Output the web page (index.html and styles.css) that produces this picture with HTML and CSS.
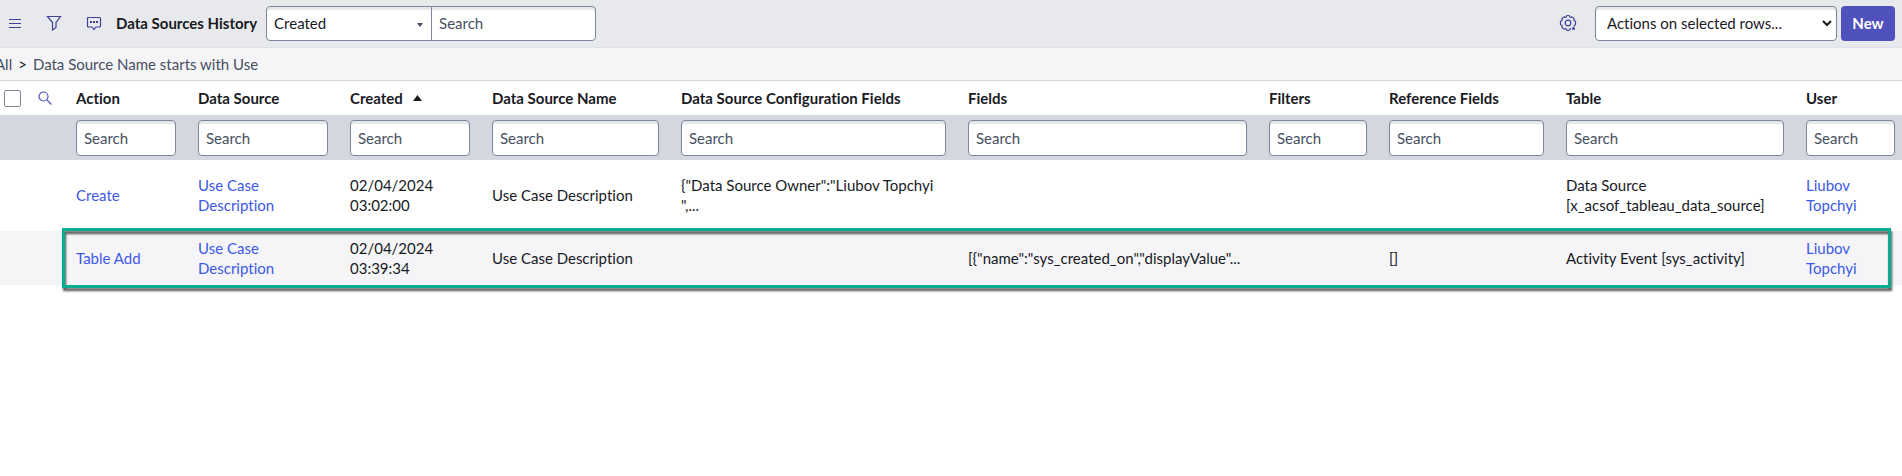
FILE: index.html
```
<!DOCTYPE html>
<html lang="en">
<head>
<meta charset="UTF-8">
<title>Data Sources History</title>
<link rel="stylesheet" href="styles.css">
</head>
<body>

<header class="toolbar">
  <button class="icon-btn" type="button" aria-label="List menu">
    <svg width="14" height="14" viewBox="0 0 14 14"><path d="M1 3.500h12M1 7.500h12M1 11.500h12"/></svg>
  </button>
  <button class="icon-btn" type="button" aria-label="Filter">
    <svg width="16" height="16" viewBox="0 0 16 16"><path d="M1.500 1.500h13l-4.500 6v5l-3.500 2.500v-7.500z"/></svg>
  </button>
  <button class="icon-btn" type="button" aria-label="Activity stream">
    <svg width="16" height="16" viewBox="0 0 16 16"><path d="M2.500 2.500h11q1 0 1 1v7.500q0 1-1 1h-3.500l-2 2.500-2-2.500h-3.500q-1 0-1-1v-7.500q0-1 1-1z"/><path class="fill" d="M4 6h2v2H4zM7 6h2v2H7zM10 6h2v2h-2z"/></svg>
  </button>
  <h1 class="title">Data Sources History</h1>
  <div class="search-group">
    <div class="select-wrap">
      <select class="field field-select" aria-label="Search column">
        <option>Created</option>
      </select>
      <svg class="caret" width="6" height="4" viewBox="0 0 6 4"><path d="M0 0h6L3 4z"/></svg>
    </div>
    <input class="field field-search" type="text" placeholder="Search" aria-label="Search list">
  </div>
  <div class="actions">
    <button class="icon-btn gear" type="button" aria-label="Personalize list">
      <svg width="18" height="18" viewBox="0 0 18 18"><path d="M15 12.500l.2-.9 1.300-.9V7.300l-1.600-.9.100-1.800-2.100-1.700-1.700.4L9.900 1.500H8.100L6.800 3.300l-1.700-.4L3 4.600l.1 1.800-1.600.9v3.400l1.600.9-.1 1.800 2.100 1.700 1.700-.4 1.300 1.800h1.800l1.300-1.800.9.2"/><circle cx="9" cy="9" r="2.800"/><circle class="fill" cx="14.500" cy="14.500" r="1.500"/></svg>
    </button>
    <div class="select-wrap">
      <select class="field field-actions" aria-label="Actions on selected rows">
        <option>Actions on selected rows...</option>
      </select>
      <svg class="chevron" width="10" height="7" viewBox="0 0 10 7"><path d="M1 1l4 4 4-4"/></svg>
    </div>
    <button class="btn-new" type="button">New</button>
  </div>
</header>

<nav class="breadcrumb" aria-label="Filter breadcrumb">
  <a href="#">All</a>
  <span>&gt;</span>
  <a href="#">Data Source Name starts with Use</a>
</nav>

<table class="list">
  <colgroup>
    <col class="col-check">
    <col class="col-zoom">
    <col class="col-action">
    <col class="col-source">
    <col class="col-created">
    <col class="col-name">
    <col class="col-config">
    <col class="col-fields">
    <col class="col-filters">
    <col class="col-reference">
    <col class="col-table">
    <col class="col-user">
  </colgroup>
  <thead>
    <tr class="head-row">
      <th class="check-cell"><input class="check" type="checkbox" aria-label="Select all"></th>
      <th class="zoom-cell">
        <button class="icon-btn zoom" type="button" aria-label="Toggle column search">
          <svg width="14" height="14" viewBox="0 0 14 14"><circle cx="5.500" cy="5.500" r="4.500"/><path d="M8.700 8.700l4.800 4.800"/></svg>
        </button>
      </th>
      <th>Action</th>
      <th>Data Source</th>
      <th>Created <svg class="sort" width="9" height="6" viewBox="0 0 9 6"><path d="M0 6h9L4.500 0z"/></svg></th>
      <th>Data Source Name</th>
      <th>Data Source Configuration Fields</th>
      <th>Fields</th>
      <th>Filters</th>
      <th>Reference Fields</th>
      <th>Table</th>
      <th>User</th>
    </tr>
    <tr class="search-row">
      <td></td>
      <td></td>
      <td><input class="field" type="text" placeholder="Search" aria-label="Search Action"></td>
      <td><input class="field" type="text" placeholder="Search" aria-label="Search Data Source"></td>
      <td><input class="field" type="text" placeholder="Search" aria-label="Search Created"></td>
      <td><input class="field" type="text" placeholder="Search" aria-label="Search Data Source Name"></td>
      <td><input class="field" type="text" placeholder="Search" aria-label="Search Data Source Configuration Fields"></td>
      <td><input class="field" type="text" placeholder="Search" aria-label="Search Fields"></td>
      <td><input class="field" type="text" placeholder="Search" aria-label="Search Filters"></td>
      <td><input class="field" type="text" placeholder="Search" aria-label="Search Reference Fields"></td>
      <td><input class="field" type="text" placeholder="Search" aria-label="Search Table"></td>
      <td><input class="field" type="text" placeholder="Search" aria-label="Search User"></td>
    </tr>
  </thead>
  <tbody>
    <tr class="row">
      <td></td>
      <td></td>
      <td><a href="#">Create</a></td>
      <td><a href="#">Use Case Description</a></td>
      <td>02/04/2024 03:02:00</td>
      <td>Use Case Description</td>
      <td class="nowrap">{"Data Source Owner":"Liubov Topchyi<br>",...</td>
      <td></td>
      <td></td>
      <td></td>
      <td>Data Source [x_acsof_tableau_data_source]</td>
      <td><a href="#">Liubov Topchyi</a></td>
    </tr>
    <tr class="row highlighted">
      <td></td>
      <td></td>
      <td><a href="#">Table Add</a></td>
      <td><a href="#">Use Case Description</a></td>
      <td>02/04/2024 03:39:34</td>
      <td>Use Case Description</td>
      <td></td>
      <td class="nowrap">[{"name":"sys_created_on","displayValue"...</td>
      <td></td>
      <td>[]</td>
      <td>Activity Event [sys_activity]</td>
      <td><a href="#">Liubov Topchyi</a></td>
    </tr>
  </tbody>
</table>

</body>
</html>
```

FILE: styles.css
```
* {
  box-sizing: border-box;
}
body {
  margin: 0;
  min-height: 100vh;
  font-family: Lato, sans-serif;
  font-size: 15px;
  line-height: 20px;
  font-variant-ligatures: none;
  color: #181a1f;
  background: #fff;
  overflow-x: hidden;
}
a {
  color: #3c59e7;
  text-decoration: none;
}
svg {
  display: block;
  fill: none;
  stroke: #3f4299;
  stroke-width: 1.2;
}
svg .fill {
  fill: #3f4299;
  stroke: none;
}

/* toolbar */
.toolbar {
  display: flex;
  align-items: center;
  height: 48px;
  padding: 0 7px 0 8px;
  background: #e8e9ed;
  border-bottom: 1px solid #e2e3e8;
}
.icon-btn {
  display: flex;
  margin: 0 24px 2px 0;
  padding: 0;
  border: 0;
  background: none;
}
.title {
  margin: 0 9px 0 -10px;
  padding-bottom: 2px;
  font-size: 15px;
  font-weight: bold;
  white-space: nowrap;
}
.search-group,
.actions {
  display: flex;
  align-items: center;
}
.actions {
  margin-left: auto;
}
.gear {
  margin-right: 18px;
}
.select-wrap {
  position: relative;
}
.field {
  display: block;
  width: 100%;
  height: 35px;
  padding: 0 7px;
  border: 1px solid #7d8799;
  border-radius: 4px;
  background: #fff;
  box-shadow: inset 0 3px 1px #e6e7e8;
  color: #181a1f;
  font: inherit;
  appearance: none;
}
.toolbar .field {
  padding-bottom: 2px;
}
.field::placeholder {
  color: #464f60;
  opacity: 1;
}
.field-select {
  width: 166px;
  border-radius: 4px 0 0 4px;
}
.field-search {
  width: 165px;
  margin-left: -1px;
  border-radius: 0 4px 4px 0;
}
.field-actions {
  width: 242px;
  padding-left: 11px;
}
.caret,
.chevron {
  position: absolute;
  top: 17px;
  right: 9px;
  pointer-events: none;
}
.caret {
  fill: #464f60;
  stroke: none;
}
.chevron {
  top: 14px;
  right: 5px;
  stroke: #181a1f;
  stroke-width: 2;
}
.btn-new {
  width: 54px;
  height: 35px;
  margin-left: 4px;
  padding: 0 0 2px;
  border: 0;
  border-radius: 4px;
  background: #4f52bd;
  color: #fff;
  font: inherit;
  font-weight: bold;
}

.breadcrumb {
  display: flex;
  gap: 6px;
  height: 33px;
  margin-left: -5px;
  padding-top: 6px;
  background: #f5f5f8;
  border-bottom: 1px solid #d4d7df;
}
.breadcrumb a {
  color: #464f60;
}

/* list */
.list {
  width: 100%;
  table-layout: fixed;
  border-collapse: collapse;
}
.col-check { width: 32px; }
.col-zoom { width: 33px; }
.col-action { width: 122px; }
.col-source { width: 152px; }
.col-created { width: 142px; }
.col-name { width: 189px; }
.col-config { width: 287px; }
.col-fields { width: 301px; }
.col-filters { width: 120px; }
.col-reference { width: 177px; }
.col-table { width: 240px; }
.col-user { width: 107px; }

th,
td {
  padding: 0 11px;
  text-align: left;
}
th:last-child,
td:last-child {
  padding-right: 7px;
}
.head-row {
  height: 34px;
}
.head-row th {
  white-space: nowrap;
}
.head-row .check-cell {
  padding: 0 4px;
}
.check {
  display: block;
  width: 17px;
  height: 17px;
  margin: 0;
  border: 1px solid #7d8799;
  border-radius: 2px;
  background: #fff;
  appearance: none;
}
.head-row .zoom-cell {
  padding: 0 6px;
}
.zoom {
  margin: 0;
}
.zoom svg {
  stroke: #4f52bd;
}
.sort {
  display: inline-block;
  margin: 0 0 3px 7px;
  fill: #181a1f;
  stroke: none;
}
.search-row {
  height: 45px;
  background: #d4d7df;
}
.search-row .field {
  height: 36px;
}
.row {
  height: 71px;
}
.row td {
  padding-bottom: 1px;
}
.nowrap {
  white-space: nowrap;
}
.highlighted {
  position: relative;
  height: 54px;
  background: #f5f5f8;
}
/* frame drawn round the row */
.highlighted::after {
  content: "";
  position: absolute;
  top: -3px;
  right: 11px;
  bottom: -3px;
  left: 62px;
  border: 3px solid #06ae8f;
  filter: drop-shadow(1px 3px 1px #000a);
  pointer-events: none;
}
```
